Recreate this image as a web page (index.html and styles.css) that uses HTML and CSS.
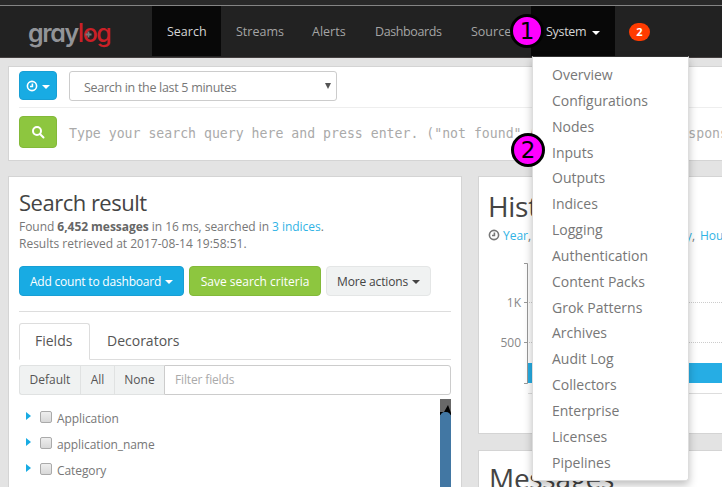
FILE: index.html
```html
<!DOCTYPE html>
<html lang="en">
<head>
<meta charset="utf-8">
<title>Graylog</title>
<link rel="stylesheet" href="styles.css">
</head>
<body>
<div class="strip"></div>
<nav class="nav">
  <div class="logo"><span class="logo-gray">gray</span><span class="logo-red">log</span><svg class="hub" viewBox="0 0 7 7"><path d="M0.5 3.5H6.5M3.5 0.5V6.5"/></svg></div>
  <a class="item active w-search">Search</a>
  <a class="item w-streams">Streams</a>
  <a class="item w-alerts">Alerts</a>
  <a class="item w-dash">Dashboards</a>
  <a class="item w-sources">Sources</a>
  <div class="item active w-system">System<i class="caret"></i>
    <span class="marker one">1</span>
    <ul class="menu">
      <li>Overview</li><li>Configurations</li><li>Nodes</li><li>Inputs</li><li>Outputs</li><li>Indices</li><li>Logging</li><li>Authentication</li><li>Content Packs</li><li>Grok Patterns</li><li>Archives</li><li>Audit Log</li><li>Collectors</li><li>Enterprise</li><li>Licenses</li><li>Pipelines</li>
    </ul>
    <span class="marker two">2</span>
  </div>
  <span class="badge">2</span>
</nav>
<section class="panel searchbar">
  <div class="range">
    <button class="btn blue clockbtn"><svg class="clock" viewBox="0 0 12 12"><circle cx="6" cy="6" r="4.6"/><path d="M6.4 3.4V6.5H4"/></svg><i class="caret"></i></button>
    <div class="select"><span>Search in the last 5 minutes</span><i class="tri"></i></div>
  </div>
  <div class="query">
    <button class="btn green go"><svg viewBox="0 0 14 14"><circle cx="6" cy="6" r="4"/><path d="M9.2 9.2L12.5 12.5"/></svg></button>
    <div class="placeholder">Type your search query here and press enter. ("not found" AND http) OR http_response_code:[400 TO 404]</div>
  </div>
</section>
<main class="cols">
  <section class="panel left">
    <h1>Search result</h1>
    <p class="found">Found <b>6,452 messages</b> in 16 ms, searched in <a>3 indices</a>.</p>
    <p class="retrieved">Results retrieved at 2017-08-14 19:58:51.</p>
    <div class="actions">
      <button class="btn blue add">Add count to dashboard<i class="caret"></i></button>
      <button class="btn green save">Save search criteria</button>
      <button class="btn plain more">More actions<i class="caret"></i></button>
    </div>
    <hr>
    <div class="tabs"><div class="tab on">Fields</div><div class="tab">Decorators</div></div>
    <div class="filter"><span class="f1">Default</span><span class="f2">All</span><span class="f3">None</span><div class="input">Filter fields</div></div>
    <div class="fieldbox">
      <ul class="fields">
        <li><i class="arrow"></i><i class="check"></i><span>Application</span></li>
        <li><i class="arrow"></i><i class="check"></i><span>application_name</span></li>
        <li><i class="arrow"></i><i class="check"></i><span>Category</span></li>
      </ul>
      <div class="scroll"><svg viewBox="0 0 11 16"><path d="M0 13H4L8 6L11 14V16H0Z"/></svg><div class="thumb"></div></div>
    </div>
  </section>
  <div class="right">
    <section class="panel histogram">
      <h2>Histogram</h2>
      <div class="units"><svg class="clock" viewBox="0 0 12 12"><circle cx="6" cy="6" r="4.6"/><path d="M6.4 3.4V6.5H4"/></svg><span class="periods"><span><a>Year</a>,</span><span><a>Quarter</a>,</span><span><a>Month</a>,</span><span><a>Week</a>,</span><span><a>Day</a>,</span></span><a class="hour">Hour</a></div>
      <svg class="chart" viewBox="0 0 243 150">
        <path class="grid" d="M48 41.5H243M48 81.5H243"/>
        <path class="bar" d="M49 102H243V122H49Z"/>
        <path class="axis" d="M45 2.5H48.5V122.5H45M45 41.5H48M45 81.5H48"/>
        <path class="base" d="M49 132.5H243"/>
        <text x="42" y="45.5">1K</text><text x="42" y="85.5">500</text>
      </svg>
    </section>
    <section class="panel messages"><h2>Messages</h2></section>
  </div>
</main>
</body>
</html>
```
FILE: styles.css
```css
* { box-sizing: border-box; }
body { margin: 0; width: 722px; height: 487px; overflow: hidden; background: #e3e3e3; color: #777; font: 12.5px/17px "Open Sans", "Noto Sans", sans-serif; display: flex; flex-direction: column; }
button { font: inherit; }
i { font-style: normal; }
ul { list-style: none; margin: 0; padding: 0; }
a { color: #30b3e5; }
.strip { height: 6px; flex: none; background: #292929; border-bottom: 1px solid #858585; }
.nav { height: 52px; flex: none; background: #222; border-bottom: 1px solid #443f3f; display: flex; align-items: flex-start; }
.logo { position: relative; width: 152px; padding-left: 28px; height: 50px; line-height: 54px; font-family: Inter, sans-serif; font-size: 25px; font-feature-settings: "cv11"; letter-spacing: -1.4px; white-space: nowrap; }
.logo-gray { color: #929498; font-weight: 600; }
.logo-red { color: #cb2027; font-weight: 500; }
.hub { position: absolute; left: 85px; top: 25px; width: 7px; height: 7px; stroke: #77797c; stroke-width: 1.8; }
.item { height: 50px; padding-left: 15px; line-height: 51px; color: #a5a5a5; font-size: 12.5px; white-space: nowrap; flex: none; }
.item.active { background: #080808; color: #d5d5d5; }
.w-search { width: 69px; }
.w-streams { width: 76px; }
.w-alerts { width: 63px; }
.w-dash { width: 96px; letter-spacing: -.4px; }
.w-sources { width: 75px; }
.w-system { width: 84px; position: relative; z-index: 5; letter-spacing: -.3px; }
.caret { display: inline-block; border: 4px solid transparent; border-top-color: currentColor; border-bottom: 0; vertical-align: 2px; margin-left: 4px; }
.item .caret { margin-left: 6px; color: #fff; vertical-align: 1px; }
.menu { position: absolute; left: 1px; top: 50px; width: 157px; height: 425px; padding: 5px 0 0 19px; background: #fff; border: 1px solid #ddd; border-top-color: #333; border-radius: 0 0 3px 3px; box-shadow: 0 4px 9px rgba(0,0,0,.25); letter-spacing: 0; }
.menu li { height: 25.85px; line-height: 25px; font-size: 14px; color: #777; }
.marker { position: absolute; width: 34px; height: 34px; border: 3px solid #000; border-radius: 50%; background: #ff00ff; color: #000; font: 23px/28px "DejaVu Sans", sans-serif; letter-spacing: 0; text-align: center; z-index: 2; }
.one { left: -21px; top: 8px; }
.two { left: -20px; top: 127px; }
.badge { margin: 17px 0 0 14px; width: 21px; height: 18px; border-radius: 9px; background: #ff3b00; color: #fff; font-weight: 700; font-size: 11px; line-height: 18px; text-align: center; }
.panel { background: #fff; border: 1px solid #d4d4d4; }
.searchbar { margin: 8px 0 0 8px; height: 95px; flex: none; padding: 4px 0 4px 10px; border-right: 0; overflow: hidden; }
.range { display: flex; gap: 12px; height: 37px; border-bottom: 1px solid #eee; }
.btn { border: 1px solid; border-radius: 4px; display: flex; align-items: center; justify-content: center; padding: 0; color: #fff; white-space: nowrap; flex: none; }
.blue { background: #18abe3; border-color: #189fd4; }
.green { background: #8dc63f; border-color: #83b939; }
.plain { background: #f0f2f2; border-color: #e4e6e6; color: #444; }
.clockbtn { width: 38px; height: 29px; }
.clock { width: 12px; height: 12px; fill: none; stroke: currentColor; stroke-width: 1.6; flex: none; }
.clockbtn .caret { margin-left: 4px; margin-top: 2px; }
.select { width: 268px; height: 30px; border: 1px solid #ccc; border-radius: 3px; padding: 2px 5px 0 14px; display: flex; align-items: center; justify-content: space-between; letter-spacing: -.3px; }
.tri { border: 3px solid transparent; border-top: 6px solid #555; border-bottom: 0; margin-top: -2px; }
.query { display: flex; padding-top: 8px; gap: 12px; }
.go { width: 38px; height: 32px; }
.go svg { width: 14px; height: 14px; fill: none; stroke: currentColor; stroke-width: 2; stroke-linecap: round; }
.placeholder { color: #aaa; font: 13.2px/36px "DejaVu Sans Mono", monospace; white-space: pre; }
.cols { display: flex; gap: 16px; margin: 15px 0 0 8px; flex: none; height: 330px; }
.left { width: 454px; padding: 10px 10px 0; flex: none; }
h1, h2 { margin: 0; font-weight: 400; color: #444; }
h1 { font-size: 22px; line-height: 31px; letter-spacing: -.5px; }
p { margin: 0; white-space: nowrap; font-size: 12px; }
.found { letter-spacing: -.04px; }
b { color: #666; }
.actions { display: flex; gap: 5px; margin-top: 14px; }
.actions .btn { height: 30px; font-size: 12px; padding-top: 1px; }
.add { width: 165px; letter-spacing: -.2px; }
.save { width: 132px; }
.more { width: 105px; letter-spacing: -.15px; }
hr { border: 0; border-top: 1px solid #ddd; margin: 15px 0 11px; }
.tabs { display: flex; height: 37px; border-bottom: 1px solid #ddd; font-size: 14px; color: #555; }
.tab { height: 37px; line-height: 35px; padding: 0 17px; }
.tab.on { width: 71px; line-height: 34px; padding: 0 0 0 15px; border: 1px solid #ddd; border-bottom-color: #fff; border-radius: 3px 3px 0 0; background: #fff; }
.filter { display: flex; height: 30px; margin-top: 5px; line-height: 28px; font-size: 12px; }
.filter span { background: #f0f2f2; border: 1px solid #e0e2e2; border-right: 0; color: #555; text-align: center; }
.f1 { width: 61px; border-radius: 3px 0 0 3px; }
.f2 { width: 34px; }
.f3 { width: 50px; }
.input { flex: 1; border: 1px solid #ccc; border-radius: 0 3px 3px 0; padding-left: 10px; color: #aaa; letter-spacing: -.15px; }
.fieldbox { display: flex; justify-content: space-between; height: 90px; margin-top: 4px; }
.fields { padding-top: 7px; }
.fields li { height: 25.8px; display: flex; padding-left: 7px; font-size: 12px; line-height: 26px; letter-spacing: -.08px; }
.arrow { width: 5px; border: 4px solid transparent; border-left: 5px solid #18abe3; border-right: 0; height: 8px; margin-top: 6px; }
.check { width: 12px; height: 12px; margin: 5px 5px 0 9px; background: linear-gradient(#eee, #d8d8d8); border: 1px solid #aaa; border-radius: 2px; }
.scroll { width: 11px; background: #686868; }
.scroll svg { display: block; width: 11px; height: 16px; }
.thumb { position: relative; height: 90px; margin-top: -3px; background: #4277a3; border-radius: 5px 5px 0 0; }
.right { width: 244px; flex: none; display: flex; flex-direction: column; gap: 16px; }
.right .panel { border-right: 0; }
.histogram { height: 258px; padding: 10px 0 0 9px; flex: none; overflow: hidden; }
h2 { font-size: 28px; line-height: 38px; letter-spacing: -.3px; }
.units { display: flex; align-items: center; height: 20px; white-space: nowrap; font-size: 12px; }
.periods { width: 192px; margin-left: 3px; display: flex; justify-content: space-between; flex: none; }
.hour { margin-left: 5px; }
.chart { display: block; width: 243px; height: 150px; margin: 16px 0 0 -9px; }
.grid { stroke: #ccc; stroke-dasharray: 1 1; }
.bar { fill: #26ade4; }
.axis { stroke: #999; fill: none; }
.base { stroke: #ddd; }
.chart text { font-size: 12px; fill: #888; text-anchor: end; }
.messages { height: 60px; padding: 8px 0 0 10px; }
```
